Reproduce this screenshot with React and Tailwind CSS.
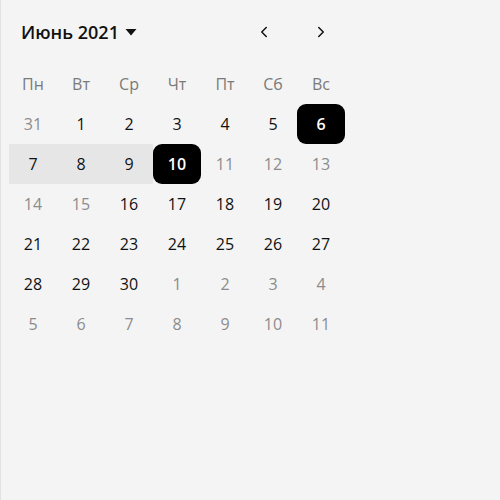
import { ChevronLeft, ChevronRight } from "lucide-react";

const weekDays = ["Пн", "Вт", "Ср", "Чт", "Пт", "Сб", "Вс"];

// m: -1 prev month, 0 current, 1 next month
const rows = [
  [[31, -1], [1, 0], [2, 0], [3, 0], [4, 0], [5, 0], [6, 0]],
  [[7, 0], [8, 0], [9, 0], [10, 0], [11, 0], [12, 0], [13, 0]],
  [[14, 0], [15, 0], [16, 0], [17, 0], [18, 0], [19, 0], [20, 0]],
  [[21, 0], [22, 0], [23, 0], [24, 0], [25, 0], [26, 0], [27, 0]],
  [[28, 0], [29, 0], [30, 0], [1, 1], [2, 1], [3, 1], [4, 1]],
  [[5, 1], [6, 1], [7, 1], [8, 1], [9, 1], [10, 1], [11, 1]],
];

const disabled = [11, 12, 13, 14, 15];

const Day = ({ day, m }) => {
  const current = m === 0;
  const today = current && day === 6;
  const selected = current && day === 10;
  const inRange = current && day >= 7 && day <= 9;
  const muted = !current || disabled.includes(day);

  let cls = "h-10 flex items-center justify-center text-[16px] ";
  if (today || selected) cls += "bg-black text-white font-semibold rounded-[9px]";
  else if (inRange) cls += "bg-[#e6e6e6] text-[#111]";
  else if (muted) cls += "text-[#8c8c8c]";
  else cls += "text-[#111]";

  return <div className={cls}>{day}</div>;
};

export default function App() {
  return (
    <div
      className="w-[500px] h-[500px] bg-[#f4f4f4] border-l border-[#e2e2e2]"
      style={{ fontFamily: '"Open Sans", sans-serif' }}
    >
      <div className="w-[344px] pl-2 pt-3">
        <div className="h-10 flex items-center">
          <button className="flex items-center gap-1.5 pl-3 text-[18px] font-semibold text-[#111]">
            Июнь 2021
            <svg width="12" height="8" viewBox="0 0 12 8">
              <path d="M0.5 1h11L6 7.5z" fill="#111" />
            </svg>
          </button>
          <div className="ml-auto flex items-center gap-[39px] pr-[15px]">
            <ChevronLeft size={18} strokeWidth={2} className="text-[#111]" />
            <ChevronRight size={18} strokeWidth={2} className="text-[#111]" />
          </div>
        </div>
        <div className="grid grid-cols-7 mt-3">
          {weekDays.map((d) => (
            <div key={d} className="h-10 flex items-center justify-center text-[16px] text-[#7a7a7a]">
              {d}
            </div>
          ))}
          {rows.flat().map(([day, m], i) => (
            <Day key={i} day={day} m={m} />
          ))}
        </div>
      </div>
    </div>
  );
}
